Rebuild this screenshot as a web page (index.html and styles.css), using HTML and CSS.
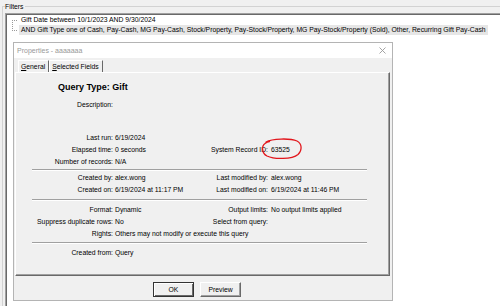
FILE: index.html
```html
<!DOCTYPE html>
<html>
<head>
<meta charset="utf-8">
<link rel="stylesheet" href="styles.css">
</head>
<body>
<fieldset class="filters">
  <legend class="filters-title">Filters</legend>
  <div class="tree">
    <ul class="tree-list">
      <li class="node"><span class="twig"></span><span class="node-text">Gift Date between 10/1/2023 AND 9/30/2024</span></li>
      <li class="node"><span class="twig"></span><span class="node-text selected">AND Gift Type one of Cash, Pay-Cash, MG Pay-Cash, Stock/Property, Pay-Stock/Property, MG Pay-Stock/Property (Sold), Other, Recurring Gift Pay-Cash</span></li>
    </ul>
  </div>
</fieldset>

<div class="dialog">
  <div class="titlebar">
    <span class="title">Properties - aaaaaaa</span>
    <svg class="close" width="7" height="7" viewBox="0 0 7 7"><path d="M0.5 0.5 L6.5 6.5 M6.5 0.5 L0.5 6.5" stroke="#9a9a9a" stroke-width="0.9" fill="none"/></svg>
  </div>
  <div class="tabs">
    <span class="tab active"><u>G</u>eneral</span>
    <span class="tab"><u>S</u>elected Fields</span>
  </div>
  <div class="panel">
    <div class="qtype">Query Type: Gift</div>
    <div class="fields desc">
      <span class="lbl">Description:</span><span class="val"></span>
    </div>
    <div class="fields s1">
      <span class="lbl">Last run:</span><span class="val">6/19/2024</span><span class="lbl2"></span><span class="val2"></span>
      <span class="lbl">Elapsed time:</span><span class="val">0 seconds</span><span class="lbl2">System Record ID:</span><span class="val2 marked">63525<svg class="ring" width="44" height="24" viewBox="0 0 44 24"><path d="M6 5 C12 1.5 30 1 37 4 C42 6.5 42.5 13 38 17.5 C32 22.5 14 22.5 7 19 C1.5 16 1.5 9 5 6.5 C6.5 5.2 8 4.6 9.5 4.5" stroke="#e2161c" stroke-width="1.3" fill="none" stroke-linecap="round"/></svg></span>
      <span class="lbl">Number of records:</span><span class="val">N/A</span><span class="lbl2"></span><span class="val2"></span>
    </div>
    <div class="sep first"></div>
    <div class="fields s2">
      <span class="lbl">Created by:</span><span class="val">alex.wong</span><span class="lbl2">Last modified by:</span><span class="val2">alex.wong</span>
      <span class="lbl">Created on:</span><span class="val">6/19/2024 at 11:17 PM</span><span class="lbl2">Last modified on:</span><span class="val2">6/19/2024 at 11:46 PM</span>
    </div>
    <div class="sep"></div>
    <div class="fields s3">
      <span class="lbl">Format:</span><span class="val">Dynamic</span><span class="lbl2">Output limits:</span><span class="val2">No output limits applied</span>
      <span class="lbl">Suppress duplicate rows:</span><span class="val">No</span><span class="lbl2">Select from query:</span><span class="val2"></span>
      <span class="lbl">Rights:</span><span class="val wide">Others may not modify or execute this query</span>
    </div>
    <div class="sep last"></div>
    <div class="fields s4">
      <span class="lbl">Created from:</span><span class="val">Query</span>
    </div>
  </div>
  <div class="buttons">
    <button class="btn default">OK</button>
    <button class="btn">Preview</button>
  </div>
</div>
</body>
</html>
```
FILE: styles.css
```css
* { box-sizing: border-box; }
html, body {
  margin: 0;
  padding: 0;
  width: 500px;
  height: 306px;
  overflow: hidden;
  background: #f0f0f0;
  font-family: "Liberation Sans", Arial, sans-serif;
  font-size: 6.8px;
  color: #000;
}

.filters {
  margin: 0 0 0 2px;
  padding: 0 0 0 2px;
  border: none;
  border-top: 1px solid #d2d2d2;
  border-left: 1px solid #d2d2d2;
  height: 306px;
  min-width: 0;
}
.filters-title {
  padding: 0 1px 0 0;
  margin: 0;
  line-height: 13px;
  font-size: 6.8px;
}

.tree {
  margin-top: 0;
  height: 300px;
  background: #fff;
  border-top: 1px solid #a0a0a0;
  border-left: 1px solid #a0a0a0;
  box-shadow: inset 1px 1px 0 #696969;
  padding-top: 1px;
}
.tree-list {
  list-style: none;
  margin: 0 0 0 6px;
  padding: 0;
  background: repeating-linear-gradient(to bottom, #9a9a9a 0 1px, transparent 1px 2px) no-repeat 0 5px / 1px calc(100% - 10px);
}
.node {
  display: flex;
  align-items: center;
  height: 10px;
  white-space: nowrap;
}
.twig {
  width: 5px;
  height: 1px;
  background: repeating-linear-gradient(to right, #9a9a9a 0 1px, transparent 1px 2px);
  margin-right: 2px;
}
.node-text {
  line-height: 10px;
  padding: 0 2px 0 2px;
}
.node-text.selected { background: #e6e6e6; }

.dialog {
  position: absolute;
  left: 13px;
  top: 42px;
  width: 380px;
  height: 259px;
  background: #f0f0f0;
  border: 1px solid #b4b4b4;
  display: flex;
  flex-direction: column;
}
.titlebar {
  height: 15px;
  background: #fff;
  display: flex;
  align-items: center;
  justify-content: space-between;
  padding: 0 6px 0 3px;
}
.title { color: #999; font-size: 7px; }
.close { display: block; }

.tabs {
  height: 14px;
  display: flex;
  align-items: flex-end;
  padding-left: 4px;
}
.tab {
  height: 12px;
  line-height: 11px;
  padding: 0 3px 0 2px;
  border-left: 1px solid #fff;
  border-top: 1px solid #fff;
  border-right: 1px solid #696969;
}
.tab u { text-decoration: underline; }

.panel {
  margin: 0 2px 0 1px;
  height: 204px;
  border: 1px solid;
  border-color: #fff #696969 #696969 #fff;
  box-shadow: inset -1px -1px 0 #a0a0a0;
}
.qtype {
  margin: 8px 0 0 42px;
  font-weight: bold;
  font-size: 9px;
  line-height: 12px;
}
.fields {
  display: grid;
  grid-template-columns: 99px 90px 66px 1fr;
  grid-auto-rows: 12px;
  line-height: 12px;
  white-space: nowrap;
}
.lbl { text-align: right; padding-right: 2px; }
.lbl2 { text-align: right; padding-right: 3px; }
.val.wide { grid-column: span 3; }
.desc { margin-top: 6px; }
.s1 { margin-top: 21px; }
.s2 { margin-top: 1px; }
.s3 { margin-top: 3px; }
.s4 { margin-top: 3px; }
.sep {
  margin: 3px 22px 0 16px;
  height: 2px;
  border-top: 1px solid #a0a0a0;
  border-bottom: 1px solid #fff;
}
.sep.first { margin-top: 1px; }
.sep.last { margin-top: 2px; }

.marked { position: relative; }
.ring {
  position: absolute;
  left: -11px;
  top: -7px;
}

.buttons {
  display: flex;
  gap: 6px;
  padding-left: 139px;
  margin-top: 6px;
}
.btn {
  width: 41px;
  height: 15px;
  padding: 0;
  font-family: inherit;
  font-size: 6.8px;
  color: #000;
  background: #f0f0f0;
  border: 1px solid;
  border-color: #fff #696969 #696969 #fff;
  box-shadow: inset -1px -1px 0 #a0a0a0;
}
.btn.default {
  border-color: #333;
  box-shadow: inset 1px 1px 0 #fff, inset -1px -1px 0 #696969;
}
```
